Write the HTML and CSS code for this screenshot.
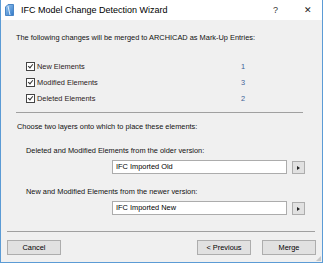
FILE: index.html
```html
<!DOCTYPE html>
<html lang="en">
<head>
    <meta charset="UTF-8">
    <title>IFC Model Change Detection Wizard</title>
    <link rel="stylesheet" href="styles.css">
</head>
<body>
    <div class="window">
        <div class="titlebar">
            <svg class="app-icon" width="9" height="12" viewBox="0 0 9 12">
                <defs>
                    <linearGradient id="g" x1="0" y1="0" x2="1" y2="1">
                        <stop offset="0" stop-color="#9cc8f0"/>
                        <stop offset="1" stop-color="#2f78c8"/>
                    </linearGradient>
                </defs>
                <path d="M0.5 11.5 V3 L3 0.5 H8.5 V11.5 Z" fill="url(#g)" stroke="#4a86c6"/>
                <path d="M3 2 L5 11" stroke="#e6f2fc" stroke-width="1"/>
            </svg>
            <span class="title">IFC Model Change Detection Wizard</span>
            <span class="help">?</span>
            <span class="close">&#x2715;</span>
        </div>
        <div class="content">
            <p class="intro">The following changes will be merged to ARCHICAD as Mark-Up Entries:</p>
            <div class="changes">
                <div class="change-row">
                    <span class="check"></span>
                    <span class="change-label">New Elements</span>
                    <span class="count">1</span>
                </div>
                <div class="change-row">
                    <span class="check"></span>
                    <span class="change-label">Modified Elements</span>
                    <span class="count">3</span>
                </div>
                <div class="change-row">
                    <span class="check"></span>
                    <span class="change-label">Deleted Elements</span>
                    <span class="count">2</span>
                </div>
            </div>
            <div class="divider"></div>
            <p class="choose">Choose two layers onto which to place these elements:</p>
            <p class="layer-label">Deleted and Modified Elements from the older version:</p>
            <div class="layer-row">
                <div class="layer-field">IFC Imported Old</div>
                <button class="arrow-btn"><span class="tri"></span></button>
            </div>
            <p class="layer-label second">New and Modified Elements from the newer version:</p>
            <div class="layer-row">
                <div class="layer-field">IFC Imported New</div>
                <button class="arrow-btn"><span class="tri"></span></button>
            </div>
        </div>
        <div class="footer">
            <div class="divider wide"></div>
            <div class="buttons">
                <button class="btn">Cancel</button>
                <span class="spacer"></span>
                <button class="btn">&lt; Previous</button>
                <button class="btn">Merge</button>
            </div>
        </div>
        <span class="grip"></span>
    </div>
</body>
</html>
```

FILE: styles.css
```css
body {
    margin: 0;
    padding: 0;
    font-family: "Liberation Sans", Arial, sans-serif;
    font-size: 7.4px;
    color: #111;
    background-color: #f0f0f0;
}
.window {
    position: relative;
    width: 323px;
    height: 263px;
    box-sizing: border-box;
    border: 1px solid #5b9bd5;
    border-top: none;
    background-color: #f0f0f0;
    display: flex;
    flex-direction: column;
}
.titlebar {
    height: 20px;
    background-color: #fff;
    display: flex;
    align-items: center;
    flex-shrink: 0;
}
.app-icon {
    margin-left: 4px;
    margin-right: 7px;
}
.title {
    font-size: 9px;
    color: #000;
    flex: 1;
}
.help {
    font-size: 9px;
    color: #333;
    margin-right: 26px;
}
.close {
    font-size: 9px;
    color: #222;
    margin-right: 10px;
}
.content {
    padding: 0 0 0 15px;
    flex: 1;
}
p {
    margin: 0;
    line-height: 12px;
}
.intro {
    margin-top: 12px;
}
.changes {
    margin-top: 14px;
    padding-left: 10px;
}
.change-row {
    height: 16px;
    display: flex;
    align-items: center;
}
.check {
    width: 7px;
    height: 7px;
    border: 1px solid #444;
    background-color: #fff;
    position: relative;
    margin-right: 2px;
}
.check::after {
    content: "";
    position: absolute;
    left: 2px;
    top: 0;
    width: 2px;
    height: 4px;
    border: solid #333;
    border-width: 0 1px 1px 0;
    transform: rotate(40deg);
}
.change-label {
    width: 204px;
    color: #2a1a1a;
}
.count {
    color: #3f5f96;
}
.divider {
    height: 1px;
    background-color: #a0a0a0;
    width: 287px;
    margin-top: 6px;
}
.choose {
    margin-top: 8px;
    padding-left: 1px;
}
.layer-label {
    margin-top: 12px;
    padding-left: 10px;
}
.layer-label.second {
    margin-top: 12px;
}
.layer-row {
    display: flex;
    align-items: flex-start;
    margin-top: 3px;
    padding-left: 96px;
}
.layer-field {
    width: 170px;
    height: 12px;
    line-height: 12px;
    border: 1px solid #acacac;
    background-color: #fff;
    padding-left: 3px;
    color: #000;
}
.arrow-btn {
    width: 13px;
    height: 13px;
    margin: 1px 0 0 5px;
    padding: 0;
    border: 1px solid #adadad;
    background-color: #e1e1e1;
    display: flex;
    align-items: center;
    justify-content: center;
}
.tri {
    width: 0;
    height: 0;
    border-top: 2.5px solid transparent;
    border-bottom: 2.5px solid transparent;
    border-left: 3px solid #222;
}
.footer {
    padding: 0 6px 7px 6px;
}
.divider.wide {
    width: 308px;
    margin: 0 0 8px 0;
}
.buttons {
    display: flex;
}
.spacer {
    flex: 1;
}
.btn {
    width: 54px;
    height: 15px;
    padding: 0;
    border: 1px solid #adadad;
    background-color: #e1e1e1;
    font-family: "Liberation Sans", Arial, sans-serif;
    font-size: 7.4px;
    color: #000;
}
.btn + .btn {
    margin-left: 11px;
}
.grip {
    position: absolute;
    right: 1px;
    bottom: 1px;
    width: 5px;
    height: 5px;
    background: radial-gradient(circle, #b0b0b0 0.6px, transparent 0.9px) 0 0 / 2px 2px;
    clip-path: polygon(100% 0, 100% 100%, 0 100%);
}
```
